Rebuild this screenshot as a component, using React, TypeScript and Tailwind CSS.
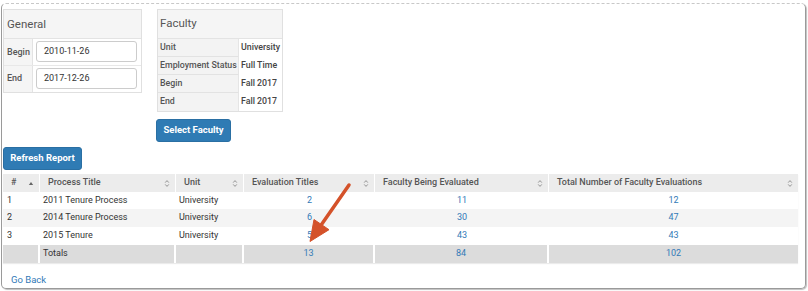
import type { ReactNode } from 'react';

const SortIcon = () => (
    <svg width="6" height="9" viewBox="0 0 6 9" className="shrink-0">
        <path d="M1.2 3.6 L3 1.6 L4.8 3.6" fill="none" stroke="#8a8a8a" strokeWidth="0.9" />
        <path d="M1.2 5.4 L3 7.4 L4.8 5.4" fill="none" stroke="#8a8a8a" strokeWidth="0.9" />
    </svg>
);

const UpIcon = () => (
    <svg width="6" height="5" viewBox="0 0 6 5" className="shrink-0">
        <path d="M0.8 4 L3 1 L5.2 4 Z" fill="#666" />
    </svg>
);

const cols = 'grid grid-cols-[37px_136px_68px_131px_174px_249px]';

function HeadCell({ children, icon }: { children: ReactNode; icon: ReactNode }) {
    return (
        <div className="flex items-center justify-between pl-[8px] pr-[5px] border-r border-white last:border-r-0">
            <span className="whitespace-nowrap">{children}</span>
            {icon}
        </div>
    );
}

const rows = [
    { n: '1', title: '2011 Tenure Process', unit: 'University', evals: '2', faculty: '11', total: '12' },
    { n: '2', title: '2014 Tenure Process', unit: 'University', evals: '6', faculty: '30', total: '47' },
    { n: '3', title: '2015 Tenure', unit: 'University', evals: '5', faculty: '43', total: '43' },
];

const facultyRows = [
    ['Unit', 'University'],
    ['Employment Status', 'Full Time'],
    ['Begin', 'Fall 2017'],
    ['End', 'Fall 2017'],
];

export default function App() {
    return (
        <div className="relative w-[808px] h-[291px] bg-white font-['Roboto',sans-serif] text-[9px] text-[#333] overflow-hidden">
            <div className="ml-px mt-[3px] w-[805px] h-[286px] rounded-[5px] border border-[#9a9a9a] border-t-[#c8c8c8] [border-top-style:dashed] shadow-[1px_1px_1px_rgba(0,0,0,0.25)] pl-px pt-[5px]">
                {/* filters */}
                <div className="flex items-start">
                    <div className="w-[139px] h-[84px] border border-[#e0e0e0]">
                        <div className="h-[29px] bg-[#f5f5f5] border-b border-[#e3e3e3] pl-[3px] pt-[6px] text-[11.5px] text-[#555]">
                            General
                        </div>
                        <div className="flex h-[27px] border-b border-[#e8e8e8]">
                            <div className="w-[29px] bg-[#f5f5f5] border-r border-[#e3e3e3] pl-[3px] pt-[7px] font-medium text-[#555]">Begin</div>
                            <div className="pl-[3px] pt-[2px]">
                                <div className="w-[101px] h-[21px] border border-[#ccc] rounded-[3px] pl-[7px] flex items-center">2010-11-26</div>
                            </div>
                        </div>
                        <div className="flex h-[26px]">
                            <div className="w-[29px] bg-[#f5f5f5] border-r border-[#e3e3e3] pl-[3px] pt-[6px] font-medium text-[#555]">End</div>
                            <div className="pl-[3px] pt-[2px]">
                                <div className="w-[101px] h-[21px] border border-[#ccc] rounded-[3px] pl-[7px] flex items-center">2017-12-26</div>
                            </div>
                        </div>
                    </div>
                    <div className="ml-[14px] flex flex-col">
                        <div className="ml-px w-[126px] border border-[#e0e0e0]">
                            <div className="h-[29px] bg-[#f5f5f5] border-b border-[#e3e3e3] pl-[2px] pt-[5px] text-[11.5px] text-[#555]">
                                Faculty
                            </div>
                            {facultyRows.map(([label, value], i) => (
                                <div key={label} className="flex h-[18px] text-[8.8px]">
                                    <div className={`w-[81px] shrink-0 whitespace-nowrap bg-[#f3f3f3] pl-[2px] flex items-center font-medium text-[#555] border-r border-[#e5e5e5] ${i < 3 ? 'border-b border-b-[#e2e2e2]' : ''}`}>
                                        {label}
                                    </div>
                                    <div className="pl-[2px] whitespace-nowrap flex items-center font-medium text-[#444]">{value}</div>
                                </div>
                            ))}
                        </div>
                        <button className="mt-[7px] w-[75px] h-[23px] rounded-[3px] bg-[#2f7bb4] border border-[#2a6fa3] text-white font-bold text-[9.5px]">
                            Select Faculty
                        </button>
                    </div>
                </div>

                <button className="mt-[5px] w-[79px] h-[23px] rounded-[3px] bg-[#2f7bb4] border border-[#2a6fa3] text-white font-bold text-[9.5px]">
                    Refresh Report
                </button>

                {/* report table */}
                <div className="mt-[4px] w-[795px] shadow-[0_1px_1px_rgba(0,0,0,0.08)]">
                    <div className={`${cols} h-[18px] bg-[#ececec] font-medium text-[#555]`}>
                        <HeadCell icon={<UpIcon />}>#</HeadCell>
                        <HeadCell icon={<SortIcon />}>Process Title</HeadCell>
                        <HeadCell icon={<SortIcon />}>Unit</HeadCell>
                        <HeadCell icon={<SortIcon />}>Evaluation Titles</HeadCell>
                        <HeadCell icon={<SortIcon />}>Faculty Being Evaluated</HeadCell>
                        <HeadCell icon={<SortIcon />}>Total Number of Faculty Evaluations</HeadCell>
                    </div>
                    {rows.map((r, i) => (
                        <div key={r.n} className={`${cols} ${i === 0 ? 'h-[17px]' : 'h-[18px]'} items-center ${i === 1 ? 'bg-[#f4f4f4]' : 'bg-white'}`}>
                            <div className="pl-[4px]">{r.n}</div>
                            <div className="pl-[3px]">{r.title}</div>
                            <div className="pl-[3px]">{r.unit}</div>
                            <div className="text-center text-[#337ab7]">{r.evals}</div>
                            <div className="text-center text-[#337ab7]">{r.faculty}</div>
                            <div className="text-center text-[#337ab7]">{r.total}</div>
                        </div>
                    ))}
                    <div className={`${cols} h-[18px] bg-white`}>
                        <div className="bg-[#dcdcdc] border-r-2 border-white" />
                        <div className="bg-[#dcdcdc] border-r-2 border-white pl-[3px] flex items-center">Totals</div>
                        <div className="bg-[#dcdcdc] border-r-2 border-white" />
                        <div className="bg-[#dcdcdc] border-r-2 border-white flex items-center justify-center text-[#337ab7]">13</div>
                        <div className="bg-[#dcdcdc] border-r-2 border-white flex items-center justify-center text-[#337ab7]">84</div>
                        <div className="bg-[#dcdcdc] flex items-center justify-center text-[#337ab7]">102</div>
                    </div>
                </div>

                <div className="mt-[10px] ml-[8px] text-[9.5px] text-[#337ab7]">Go Back</div>
            </div>

            {/* callout arrow */}
            <svg className="absolute left-0 top-0 pointer-events-none" width="808" height="291" viewBox="0 0 808 291">
                <line x1="349" y1="185" x2="321.5" y2="224.5" stroke="#d4522a" strokeWidth="3.5" strokeLinecap="round" />
                <path d="M310 241.5 L314 219.5 L329 229.7 Z" fill="#d4522a" stroke="#d4522a" strokeWidth="1" strokeLinejoin="round" />
            </svg>
        </div>
    );
}
